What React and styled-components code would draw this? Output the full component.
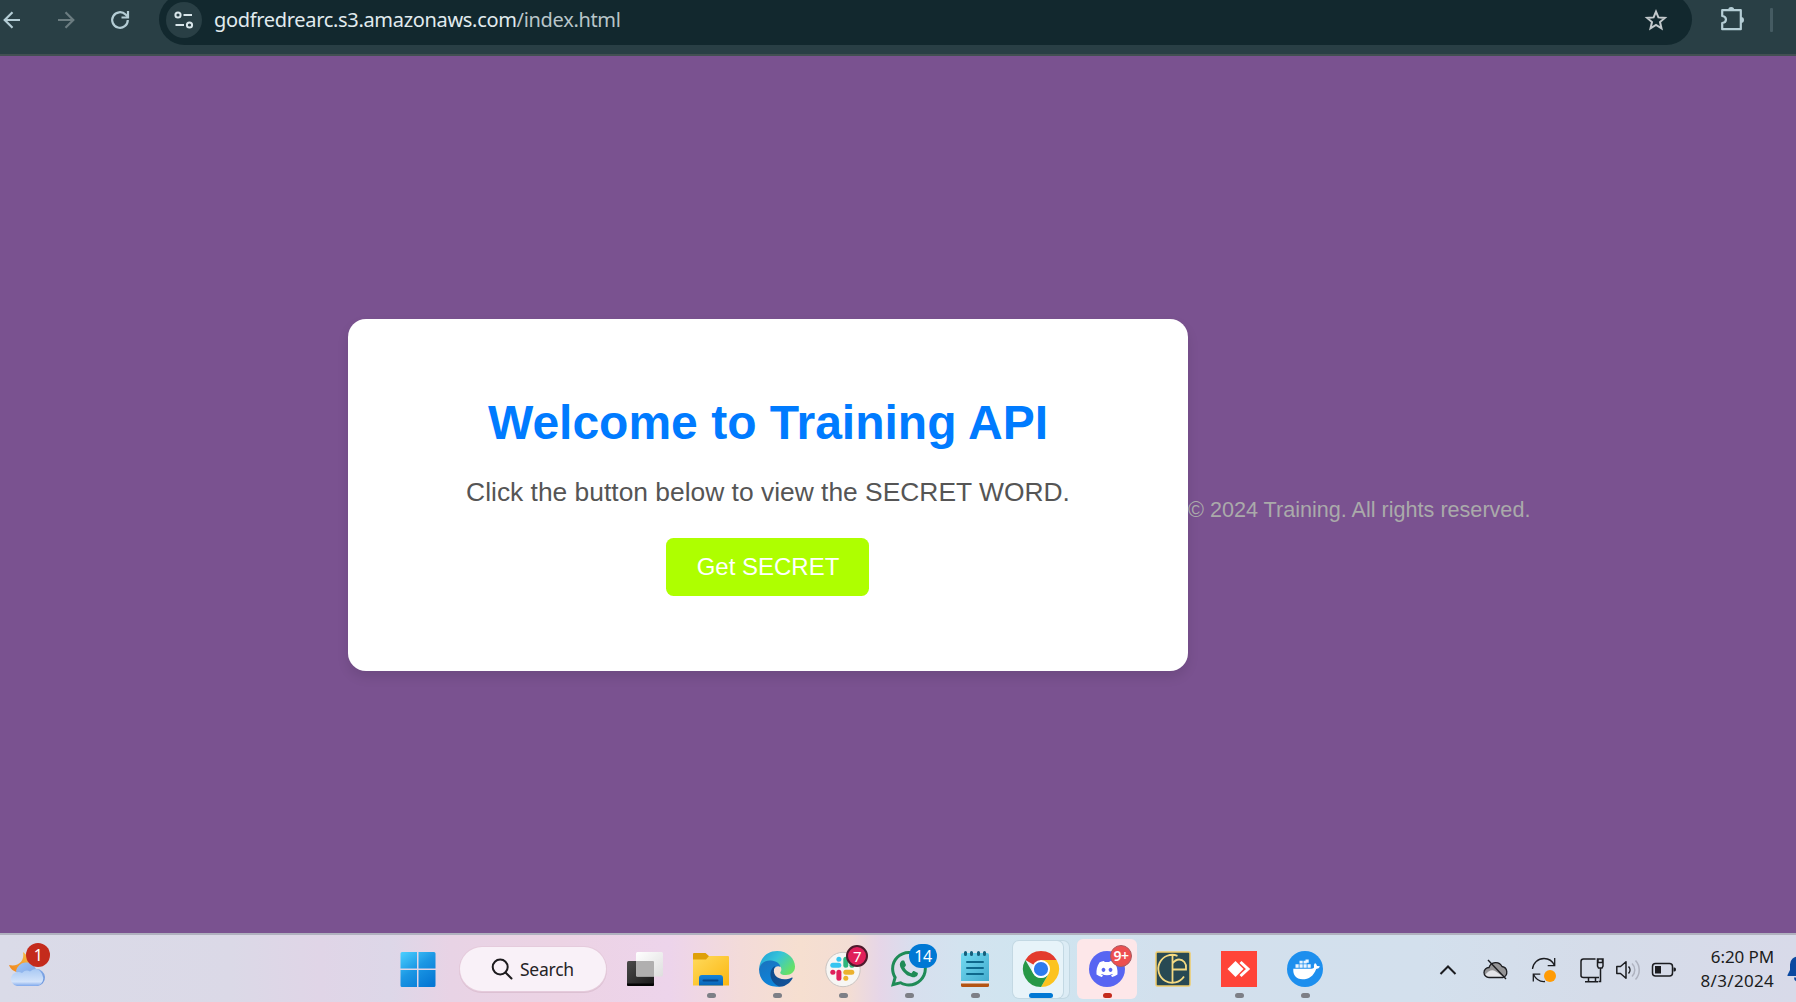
import React from "react";
import styled, { createGlobalStyle } from "styled-components";
import { FaDiscord, FaWhatsapp } from "react-icons/fa6";

const Global = createGlobalStyle`
  * { box-sizing: border-box; }
  body { margin: 0; overflow: hidden; }
  svg { flex: none; }
`;

const ui = `"Noto Sans", "Open Sans", sans-serif`;
const arial = `"Liberation Sans", Arial, sans-serif`;

const Screen = styled.div`
  width: 1796px;
  height: 1002px;
  display: flex;
  flex-direction: column;
  overflow: hidden;
`;

const Toolbar = styled.header`
  height: 56px;
  flex: none;
  display: flex;
  align-items: flex-start;
  background: #293f45;
  border-bottom: 2px solid #435053;
  overflow: hidden;
`;

const NavButton = styled.span`
  width: 54px;
  height: 39px;
  flex: none;
  display: flex;
  align-items: center;
  justify-content: center;
  color: ${(p) => (p.$dim ? "#6b7c80" : "#b4cdd5")};
`;

const NavGroup = styled.nav`
  display: flex;
  margin-left: -15px;
  margin-right: 12px;
`;

const Omnibox = styled.div`
  width: 1533px;
  height: 51px;
  flex: none;
  margin-top: -6px;
  padding: 0 24px 0 7px;
  border-radius: 26px;
  background: #12282e;
  display: flex;
  align-items: center;
`;

const SiteInfo = styled.span`
  width: 36px;
  height: 36px;
  border-radius: 50%;
  background: #293f45;
  display: flex;
  align-items: center;
  justify-content: center;
`;

const Address = styled.span`
  margin-left: 12px;
  flex: 1;
  font: 400 20px/28px ${ui};
  letter-spacing: -0.32px;
  color: #e1ebee;
  white-space: nowrap;
`;

const AddressPath = styled.span`
  color: #b9c5c9;
`;

const Extensions = styled.div`
  height: 37px;
  margin-left: 28px;
  display: flex;
  align-items: center;
  gap: 25px;
`;

const Divider = styled.span`
  width: 3px;
  height: 24px;
  margin-top: 2px;
  border-radius: 1px;
  background: #455b62;
`;

const Page = styled.main`
  flex: 1;
  display: flex;
  align-items: center;
  padding-left: 348px;
  background: #7a5290;
  font-family: ${arial};
`;

const Card = styled.section`
  width: 840px;
  height: 352px;
  padding-top: 76px;
  border-radius: 18px;
  background: #fff;
  box-shadow: 0 6px 12px rgba(0, 0, 0, 0.1);
  display: flex;
  flex-direction: column;
  align-items: center;
`;

const Title = styled.h1`
  margin: 0 0 27px;
  font-size: 48px;
  line-height: 55px;
  font-weight: 700;
  color: #007bff;
`;

const Lead = styled.p`
  margin: 0 0 31px;
  font-size: 26.4px;
  line-height: 30px;
  color: #555;
`;

const SecretButton = styled.button`
  width: 203px;
  height: 58px;
  margin-right: 1px;
  padding: 0 0 0 1px;
  border: 0;
  border-radius: 7.5px;
  background: #aeff00;
  color: #fff;
  font: 400 24px/28px ${arial};
`;

const Footer = styled.footer`
  margin-top: 30px;
  font-size: 21.6px;
  line-height: 25px;
  color: #aaa;
  white-space: nowrap;
`;

const Taskbar = styled.footer`
  height: 69px;
  flex: none;
  display: flex;
  border-top: 2px solid #b0b1be;
  background: linear-gradient(
    90deg,
    #dadbe8 0, #dbd9e7 230px, #e0d5e7 320px, #ddd7e8 390px, #e8d3e5 450px,
    #ecd3e4 560px, #edd4eb 670px, #f3dbd9 740px, #f6dfd0 800px, #f3ddd4 850px,
    #e6d6e8 880px, #d7dfee 915px, #d3e3ef 960px, #cfe5f0 1040px, #d2e0ed 1160px,
    #d3e0ed 1420px, #d5dce9 1600px, #d8dae9 1796px
  );
`;

const Widgets = styled.div`
  width: 385px;
  flex: none;
  padding: 8px 0 0 9px;

  svg { margin-top: 8px; }
`;

const IconBox = styled.span`
  position: relative;
  display: flow-root;
  width: 36px;
  height: 36px;

  svg { display: block; overflow: visible; }
`;

const Badge = styled.span`
  position: absolute;
  top: ${(p) => p.$top}px;
  left: ${(p) => p.$left}px;
  min-width: ${(p) => p.$size || 24}px;
  height: ${(p) => p.$h || 24}px;
  border-radius: 13px;
  border: ${(p) => p.$border || "0"};
  background: ${(p) => p.$bg};
  color: #fff;
  font: ${(p) => p.$weight || 400} ${(p) => p.$font || 16}px/1 ${ui};
  letter-spacing: -0.5px;
  display: flex;
  align-items: center;
  justify-content: center;
`;

const Slot = styled.div`
  position: relative;
  width: 66px;
  height: 67px;
  flex: none;
  display: flex;
  flex-direction: column;
  align-items: center;
  padding-top: 16px;
`;

const Running = styled.span`
  width: ${(p) => (p.$wide ? 24 : 9)}px;
  height: 5px;
  margin-top: 6px;
  border-radius: 3px;
  background: ${(p) => p.$color || "#7d7f86"};
  z-index: 1;
`;

const Highlight = styled.span`
  position: absolute;
  top: ${(p) => p.$top}px;
  left: ${(p) => p.$left}px;
  width: ${(p) => p.$w}px;
  height: ${(p) => p.$h}px;
  border-radius: 6px;
  background: ${(p) => p.$bg};
  box-shadow: ${(p) => p.$shadow || "none"};
`;

const SearchPill = styled.div`
  width: 146px;
  height: 44px;
  flex: none;
  margin: 12px 6px 0 9px;
  padding-left: 31px;
  border-radius: 22px;
  background: #f9f1f8;
  box-shadow: 0 0 0 1px #e5cbdc, 0 1px 0 1px #dcc0d2;
  display: flex;
  align-items: center;
  gap: 7px;
  font: 400 17.5px/24px ${ui};
  letter-spacing: -0.25px;
  color: #252326;
`;

const Tray = styled.div`
  margin-left: 92px;
  height: 67px;
  display: flex;
  align-items: center;
  color: #1b1c20;
`;

const TrayItem = styled.span`
  width: ${(p) => p.$w}px;
  height: 36px;
  flex: none;
  margin-top: 2px;
  display: flex;
  align-items: center;
  justify-content: center;
`;

const Clock = styled.div`
  width: 80px;
  flex: none;
  display: flex;
  flex-direction: column;
  align-items: flex-end;
  font: 400 17px/24px ${ui};
  color: #1b1c20;
  white-space: nowrap;
`;

const ClockLine = styled.span`
  letter-spacing: ${(p) => p.$track}px;
`;

const Bell = styled.span`
  width: 10px;
  height: 27px;
  margin-left: 12px;
  overflow: hidden;

  svg { display: block; }
`;

const Back = () => (
  <svg width="18" height="18" viewBox="0 0 18 18" fill="none" stroke="currentColor" strokeWidth="2.2">
    <path d="M17 9H2M9.5 1.2 1.7 9l7.8 7.8" />
  </svg>
);
const Forward = () => (
  <svg width="18" height="18" viewBox="0 0 18 18" fill="none" stroke="currentColor" strokeWidth="2.2">
    <path d="M1 9H16M8.5 1.2 16.3 9l-7.8 7.8" />
  </svg>
);
const Reload = () => (
  <svg width="20" height="20" viewBox="0 0 20 20" fill="none" stroke="currentColor" strokeWidth="2.2">
    <path d="M17.8 10A7.8 7.8 0 1 1 15.6 4.6L17.5 6.6" />
    <path d="M18 1v6.5h-6.5" />
  </svg>
);
const Tune = () => (
  <svg width="20" height="18" viewBox="0 0 20 18" fill="none" stroke="#d9e6ea" strokeWidth="2">
    <circle cx="4" cy="4" r="2.6" /><path d="M9.5 4H18M1.500 14H10" /><circle cx="15.500" cy="14" r="2.600" />
  </svg>
);
const Star = () => (
  <svg width="24" height="24" viewBox="0 0 24 24" fill="none" stroke="#c3c9cc" strokeWidth="2">
    <path d="m12 3.600 2.400 5.800 6.500.5-4.900 4.200 1.500 6.300-5.500-3.400-5.500 3.400L8 14.100 3.100 9.900l6.500-.5z" />
  </svg>
);
const Puzzle = () => (
  <svg width="25" height="25" viewBox="0 0 25 25">
    <path d="M2.600 4.200h18.200v19H2.200V17c5-.6 5-6.400 0-7V4.200z" fill="none" stroke="#b4cdd5" strokeWidth="2.200" strokeLinejoin="round" />
    <path d="M8.200 4a3 3 0 0 1 6 0zM21 11a3 3 0 0 1 0 6z" fill="#b4cdd5" />
  </svg>
);

const Weather = () => (
  <svg width="36" height="36" viewBox="0 0 36 36">
    <defs>
      <linearGradient id="moon" x1="1" y1="0" x2="0" y2="1"><stop stopColor="#f7bd45" /><stop offset="1" stopColor="#f0831a" /></linearGradient>
      <linearGradient id="cloudBack" x1="0" y1="0" x2="1" y2="1"><stop stopColor="#9fc3f4" /><stop offset="1" stopColor="#6c95dc" /></linearGradient>
      <linearGradient id="cloudFront" x1="0" y1="0" x2="0" y2="1"><stop stopColor="#a9c9f4" /><stop offset=".75" stopColor="#d3e3fa" /><stop offset="1" stopColor="#7ea8ec" /></linearGradient>
    </defs>
    <path d="M14 1C16 10 9 16 0 14c2 6 9 9 15 6s7-14-1-19z" fill="url(#moon)" />
    <path d="M7 20a10.500 10.500 0 0 1 20-2 8.500 8.500 0 0 1 1 17H14z" fill="url(#cloudBack)" />
    <path d="M8 35a7.500 7 0 1 1 5-13q4-4 8-1.500Q27 16 31 20q6 7 1 13-1.500 2-5 2z" fill="url(#cloudFront)" />
  </svg>
);
const WindowsLogo = () => (
  <svg width="36" height="36" viewBox="0 0 36 36">
    <defs><linearGradient id="win" gradientUnits="userSpaceOnUse" x1="2" y1="0" x2="28" y2="36"><stop stopColor="#4bd0ff" /><stop offset=".5" stopColor="#1b97e4" /><stop offset="1" stopColor="#0678d4" /></linearGradient></defs>
    <path fill="url(#win)" d="M2 1h15v16.500H.5V2.500Q.5 1 2 1zM18.500 1H34q1.500 0 1.500 1.500v15h-17zM.5 19H17v17H2q-1.500 0-1.500-1.500zM18.500 19h17v15.500Q35.500 36 34 36H18.500z" />
  </svg>
);
const Magnifier = () => (
  <svg width="22" height="22" viewBox="0 0 22 22" fill="none" stroke="#1d1b1e" strokeWidth="2">
    <circle cx="9.200" cy="9" r="7.500" /><path d="m14.500 14.500 6 6" strokeLinecap="round" />
  </svg>
);
const TaskView = () => (
  <svg width="36" height="36" viewBox="0 0 36 36">
    <defs>
      <linearGradient id="tvBack" x1="0" y1="0" x2="1" y2="1"><stop stopColor="#4b4a4a" /><stop offset="1" stopColor="#191919" /></linearGradient>
      <linearGradient id="tvFront" x1="0" y1="0" x2="1" y2="1"><stop stopColor="#fff" /><stop offset="1" stopColor="#dedede" /></linearGradient>
    </defs>
    <rect x="0" y="10" width="27" height="25" rx="1.500" fill="url(#tvBack)" />
    <path d="M0 32.500h27v1Q27 35 25.500 35H1.500Q0 35 0 33.500z" fill="#050505" />
    <rect x="9" y="1" width="27" height="24.500" rx="1.500" fill="url(#tvFront)" />
    <path d="M9 10h17q1 0 1 1v14.500H10q-1 0-1-1z" fill="#b0afaf" />
  </svg>
);
const Explorer = () => (
  <svg width="36" height="36" viewBox="0 0 36 36">
    <defs>
      <linearGradient id="folder" x1="0" y1="0" x2="1" y2="1"><stop stopColor="#ffda5c" /><stop offset="1" stopColor="#fbb711" /></linearGradient>
      <linearGradient id="drawer" x1="0" y1="0" x2="0" y2="1"><stop stopColor="#1583d8" /><stop offset="1" stopColor="#0864b8" /></linearGradient>
    </defs>
    <path d="M1 2h11.500L17 6v5H0V3q0-1 1-1z" fill="#dfa008" />
    <path d="M0 8.500h13L16 5h19q1 0 1 1v28.500H0z" fill="url(#folder)" />
    <path d="M6 34.500V27q0-3 3-3h18q3 0 3 3v7.500z" fill="url(#drawer)" />
    <path d="M10.500 29.500h14" stroke="#07478c" strokeWidth="2" strokeLinecap="round" />
  </svg>
);
const Edge = () => (
  <svg width="36" height="36" viewBox="0 0 36 36">
    <defs>
      <linearGradient id="edgeTop" x1="0" y1="0" x2="1" y2=".6"><stop stopColor="#1c9bd8" /><stop offset=".5" stopColor="#36c4d8" /><stop offset="1" stopColor="#66e068" /></linearGradient>
      <linearGradient id="edgeLeft" x1="0" y1="0" x2=".5" y2="1"><stop stopColor="#1b72bd" /><stop offset="1" stopColor="#0c85dc" /></linearGradient>
      <linearGradient id="edgeDark" x1="0" y1="0" x2="1" y2="1"><stop stopColor="#0d4889" /><stop offset="1" stopColor="#14559c" /></linearGradient>
    </defs>
    <path d="M0 18C1 7 8 0 18 0c11 0 18 8 18 15.500 0 5.500-4 8.500-9 8.500-4 0-6.500-1.600-5.500-3 1.500-2 1-5-1.500-7C15 8 4 9 0 18z" fill="url(#edgeTop)" />
    <path d="M0 18C1.500 11.500 7 9 12 9.500c5 .3 9 3 9.500 6.500-4-2.500-8 1.500-7.500 7 .5 7 6.500 11 12 11-9 4.500-26 1-26-16z" fill="url(#edgeLeft)" />
    <path d="M16 15c-7 4-6 16 4 20.500 6 .7 11-3.500 13.500-8 .4-.8-.3-1.200-1-.8C23 31 11 26 16 15z" fill="url(#edgeDark)" />
  </svg>
);
const Slack = () => (
  <svg width="36" height="36" viewBox="0 0 36 36">
    <circle cx="18" cy="18.500" r="17.200" fill="#f7f6f4" stroke="#cac4c1" strokeWidth="1" />
    <g strokeWidth="5" strokeLinecap="round" fill="none">
      <path d="M7.800 14.200h6" stroke="#36c5f0" /><path d="M13.900 8.200v.1" stroke="#36c5f0" />
      <path d="M20.800 8.200v6" stroke="#2eb67d" /><path d="M26.900 14.200h.1" stroke="#2eb67d" />
      <path d="M13.900 21.200v6" stroke="#e01e5a" /><path d="M7.800 21.200h.1" stroke="#e01e5a" />
      <path d="M20.800 21.200h6" stroke="#ecb22e" /><path d="M20.800 27.200v.1" stroke="#ecb22e" />
    </g>
  </svg>
);
const WhatsApp = () => (
  <svg width="36" height="36" viewBox="0 0 36 36">
    <FaWhatsapp x="-2.600" y="-2.600" size={41} color="#1f8b57" />
  </svg>
);
const Notepad = () => (
  <svg width="36" height="36" viewBox="0 0 36 36">
    <defs><linearGradient id="note" x1="0" y1="0" x2="1" y2="1"><stop stopColor="#74daf2" /><stop offset="1" stopColor="#43acce" /></linearGradient></defs>
    <path d="M4 31h28v3.500q0 1.500-1.500 1.500h-25Q4 36 4 34.500z" fill="#b45413" />
    <path d="M4 29h28v3.500H4z" fill="#e9e9ed" />
    <path d="M4 4q0-2 2-2h24q2 0 2 2v26H4z" fill="url(#note)" />
    <path d="M8.500 1.500v2M14.500 1.500v2M21.500 1.500v2M27.500 1.500v2" stroke="#155f7b" strokeWidth="3" strokeLinecap="round" />
    <path d="M10 11h16M10 17h16M10 23h16" stroke="#0e688c" strokeWidth="2" strokeLinecap="round" />
  </svg>
);
const Chrome = () => (
  <svg width="36" height="36" viewBox="0 0 36 36">
    <path d="M18 18 2.400 9A18 18 0 0 1 33.600 9z" fill="#e33b2e" />
    <path d="M18 9h15.600A18 18 0 0 1 18 36l7.800-13.500z" fill="#fcc31e" />
    <path d="M2.400 9 10.200 22.500A9 9 0 0 0 25.800 22.500L18 36A18 18 0 0 1 2.400 9z" fill="#279847" />
    <circle cx="18" cy="18" r="9" fill="#fff" /><circle cx="18" cy="18" r="7.100" fill="#2f7bed" />
  </svg>
);
const Discord = () => (
  <svg width="36" height="36" viewBox="0 0 36 36">
    <circle cx="18" cy="18" r="18" fill="#5865f2" />
    <FaDiscord x="6.500" y="6.500" size={23} color="#fff" />
  </svg>
);
const Monogram = () => (
  <svg width="36" height="36" viewBox="0 0 36 36">
    <rect x="1" y="1" width="34" height="34" rx="1.500" fill="#284953" stroke="#f0cc69" strokeWidth="1.500" />
    <path d="M29 25.500A14 14 0 1 1 22.500 4.800M17.500 4v28M17.500 12.500q3-4 6.500-4a7 7.500 0 0 1 7 8.500v1.500H17.500" fill="none" stroke="#f5da82" strokeWidth="1.800" />
  </svg>
);
const AnyDesk = () => (
  <svg width="36" height="36" viewBox="0 0 36 36">
    <path d="M0 0h36v36H0z" fill="#ff4438" />
    <path d="m6.500 18 8-8 8 8-8 8z" fill="#fff" />
    <path d="m19.500 11 7.500 7-7.500 7" fill="none" stroke="#fff" strokeWidth="3" />
  </svg>
);
const Docker = () => (
  <svg width="36" height="36" viewBox="0 0 36 36">
    <circle cx="18" cy="18" r="18" fill="#1d8fee" />
    <path d="M6.300 17.800h18.400q2-.3 2.300-1.200-1-2.300 1-4.600 1.700 1 2 3 2-.4 3 .6-1 2.200-3.800 2.300C26.500 25 22 28.200 15.500 28.200c-6.500 0-9.700-4-9.200-10.400z" fill="#fff" />
    <path d="M8.500 13.200h3.200v3.600H8.500zM12.500 13.200h3.200v3.600h-3.200zM16.500 13.200h3.200v3.600h-3.200zM20.500 13.200h3.200v3.600h-3.200zM12.500 9.800h3.200v2.800h-3.200zM16.500 9.800h3.200v2.800h-3.200zM18 9.800h1.700v2.800H18zM18.500 8.500h3.200v3.200h-3.200z" fill="#eaf5ff" />
  </svg>
);

const ChevronUp = () => (
  <svg width="18" height="12" viewBox="0 0 18 12" fill="none" stroke="currentColor" strokeWidth="2"><path d="m1.500 10 7.500-7.500 7.500 7.500" /></svg>
);
const CloudOff = () => (
  <svg width="26" height="22" viewBox="0 0 26 22">
    <path d="M6 18.500a5 5 0 0 1 0-10 7 7 0 0 1 13-1 5.700 5.700 0 0 1 1 11z" fill="#949496" />
    <path d="M2 16c3-4 7-6 10-4l9 6-15 .5z" fill="#e3e4e8" />
    <path d="M6 18.500a5 5 0 0 1 0-10 7 7 0 0 1 13-1 5.700 5.700 0 0 1 1 11z" fill="none" stroke="#1b1c20" strokeWidth="1.300" />
    <path d="m5 1 18 19" stroke="#1b1c20" strokeWidth="1.400" />
  </svg>
);
const Sync = () => (
  <svg width="26" height="26" viewBox="0 0 26 26" fill="none" stroke="#1b1c20" strokeWidth="1.300">
    <path d="M1.500 12C2 6 7 1.500 13 1.500c5 0 8.500 2.500 10.500 7M23.700 1v7.700h-7M2.300 24.500v-7.300h7M2.500 17.500c2.500 5 6.500 7.500 11.500 7" />
    <circle cx="19" cy="19" r="6" fill="#ff9b05" stroke="none" />
  </svg>
);
const Network = () => (
  <svg width="26" height="26" viewBox="0 0 26 26" fill="none" stroke="#1b1c20" strokeWidth="1.500">
    <path d="M16.500 2H4.500Q2 2 2 4.500v14Q2 20.500 4.500 20.500H20M9.500 20.500v4M16.500 20.500v4M6 24.700h13M19 1.500v4M23.500 1.500v4M18.500 2H24v7l-1 2h-3.500l-1-2zM18.500 5.500H24M21.500 11v13.500h-2" />
  </svg>
);
const Volume = () => (
  <svg width="26" height="24" viewBox="0 0 26 24" fill="none" stroke="#1b1c20" strokeWidth="1.500">
    <path d="M1.800 8.500h3.700L11 3.700v16.500L5.500 15.500H1.800z" strokeLinejoin="round" /><path d="M13.500 8.500a5 5 0 0 1 0 7" />
    <path d="M17 5.500a9 9 0 0 1 0 13M20.500 2.500a14 14 0 0 1 0 19" stroke="#aeb2bf" />
  </svg>
);
const Battery = () => (
  <svg width="26" height="16" viewBox="0 0 26 16">
    <rect x="1.500" y="1.500" width="20" height="12.500" rx="3" fill="none" stroke="#1b1c20" strokeWidth="1.500" />
    <path d="M4 4h6v7.500H4zM22.500 5.500h1q1.500 0 1.500 2t-1.500 2h-1z" fill="#1b1c20" />
  </svg>
);
const BellIcon = () => (
  <svg width="24" height="27" viewBox="0 0 24 27" fill="#0b49a0">
    <path d="M12 1.500a8 8 0 0 0-8 8V15l-2.500 5V21h21v-1L20 15V9.500a8 8 0 0 0-8-8zM8 22.500a4 4 0 0 0 8 0z" />
  </svg>
);

function AppSlot({ children, badge, running, wide, color, highlight }) {
  return (
    <Slot>
      {highlight}
      <IconBox>{children}{badge}</IconBox>
      {running && <Running $wide={wide} $color={color} />}
    </Slot>
  );
}

export default function App() {
  return (
    <Screen>
      <Global />
      <Toolbar>
        <NavGroup>
          <NavButton><Back /></NavButton>
          <NavButton $dim><Forward /></NavButton>
          <NavButton><Reload /></NavButton>
        </NavGroup>
        <Omnibox>
          <SiteInfo><Tune /></SiteInfo>
          <Address>godfredrearc.s3.amazonaws.com<AddressPath>/index.html</AddressPath></Address>
          <Star />
        </Omnibox>
        <Extensions><Puzzle /><Divider /></Extensions>
      </Toolbar>

      <Page>
        <Card>
          <Title>Welcome to Training API</Title>
          <Lead>Click the button below to view the SECRET WORD.</Lead>
          <SecretButton>Get SECRET</SecretButton>
        </Card>
        <Footer>© 2024 Training. All rights reserved.</Footer>
      </Page>

      <Taskbar>
        <Widgets>
          <IconBox>
            <Weather />
            <Badge $top={0} $left={17} $bg="#c42b1c">1</Badge>
          </IconBox>
        </Widgets>
        <AppSlot><WindowsLogo /></AppSlot>
        <SearchPill><Magnifier />Search</SearchPill>
        <AppSlot><TaskView /></AppSlot>
        <AppSlot running><Explorer /></AppSlot>
        <AppSlot running><Edge /></AppSlot>
        <AppSlot running badge={<Badge $top={-6} $left={21} $size={22} $h={22} $bg="#e01e5a" $border="2px solid #4d1a2c" $font={15}>7</Badge>}><Slack /></AppSlot>
        <AppSlot running badge={<Badge $top={-7} $left={18} $size={28} $bg="#0078d4">14</Badge>}><WhatsApp /></AppSlot>
        <AppSlot running><Notepad /></AppSlot>
        <AppSlot
          running wide color="#0078d4"
          highlight={<>
            <Highlight $top={6} $left={10} $w={51} $h={57} $bg="#dcecf5" $shadow="0 0 0 1px #c3d8e3" />
            <Highlight $top={6} $left={5} $w={50} $h={57} $bg="#e7f3f9" $shadow="0 0 0 1px #c3d8e3" />
          </>}
        ><Chrome /></AppSlot>
        <AppSlot
          running color="#c42b1c"
          highlight={<Highlight $top={4} $left={3} $w={60} $h={60} $bg="#fde7e9" />}
          badge={<Badge $top={-6} $left={21} $size={22} $h={22} $bg="#ed4f50" $border="1px solid #a65a60" $font={14} $weight={600}>9+</Badge>}
        ><Discord /></AppSlot>
        <AppSlot><Monogram /></AppSlot>
        <AppSlot running><AnyDesk /></AppSlot>
        <AppSlot running><Docker /></AppSlot>
        <Tray>
          <TrayItem $w={36}><ChevronUp /></TrayItem>
          <TrayItem $w={60}><CloudOff /></TrayItem>
          <TrayItem $w={36}><Sync /></TrayItem>
          <TrayItem $w={60}><Network /></TrayItem>
          <TrayItem $w={12}><Volume /></TrayItem>
          <TrayItem $w={60}><Battery /></TrayItem>
          <Clock>
            <ClockLine $track={-0.1}>6:20 PM</ClockLine>
            <ClockLine $track={0.3}>8/3/2024</ClockLine>
          </Clock>
          <Bell><BellIcon /></Bell>
        </Tray>
      </Taskbar>
    </Screen>
  );
}
